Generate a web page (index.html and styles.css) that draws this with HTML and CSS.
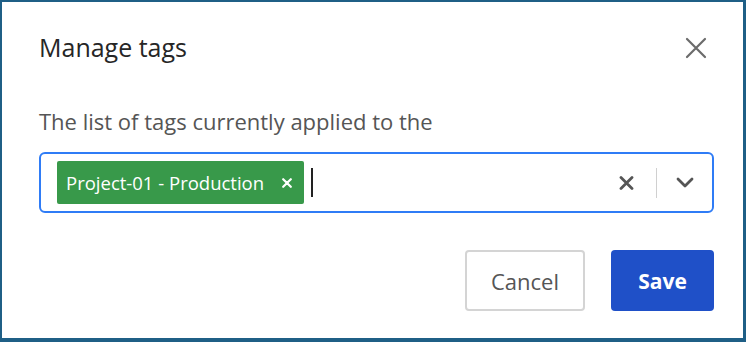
FILE: index.html
```html
<!DOCTYPE html>
<html>
<head>
<meta charset="utf-8">
<link rel="stylesheet" href="styles.css">
</head>
<body>
<div class="dialog">
  <div class="header">
    <h1 class="title">Manage tags</h1>
    <button class="close" aria-label="Close">
      <svg width="22" height="22" viewBox="0 0 22 22"><path d="M2 2 L20 20 M20 2 L2 20" stroke="#6b6b6b" stroke-width="2.2" stroke-linecap="round"/></svg>
    </button>
  </div>
  <p class="desc">The list of tags currently applied to the</p>
  <div class="select">
    <div class="values">
      <span class="tag">Project-01 - Production
        <svg class="tag-x" width="10" height="10" viewBox="0 0 10 10"><path d="M1.2 1.2 L8.8 8.8 M8.8 1.2 L1.2 8.8" stroke="#fff" stroke-width="2.2" stroke-linecap="round"/></svg>
      </span>
      <span class="caret"></span>
    </div>
    <div class="indicators">
      <svg class="clear" width="15" height="14" viewBox="0 0 15 14"><path d="M2 1.5 L13 12.5 M13 1.5 L2 12.5" stroke="#555" stroke-width="2.8" stroke-linecap="round"/></svg>
      <span class="sep"></span>
      <svg class="chev" width="18" height="11" viewBox="0 0 18 11"><path d="M2 2 L9 9 L16 2" fill="none" stroke="#555" stroke-width="2.8" stroke-linecap="round" stroke-linejoin="round"/></svg>
    </div>
  </div>
  <div class="footer">
    <button class="btn cancel">Cancel</button>
    <button class="btn save">Save</button>
  </div>
</div>
</body>
</html>
```
FILE: styles.css
```css
html, body {
  margin: 0;
  padding: 0;
  background: #fff;
}
body {
  width: 746px;
  height: 342px;
  font-family: "Open Sans", "Noto Sans", sans-serif;
  overflow: hidden;
}
.dialog {
  box-sizing: border-box;
  width: 746px;
  height: 342px;
  border-style: solid;
  border-color: #1f5f86;
  border-width: 2px 3px 4px 2px;
  padding: 28px 29px 0 37px;
  display: flex;
  flex-direction: column;
}
.header {
  display: flex;
  align-items: center;
  justify-content: space-between;
}
.title {
  margin: 0;
  font-size: 25px;
  font-weight: 400;
  color: #262626;
  line-height: 34px;
}
.close {
  background: none;
  border: 0;
  padding: 0;
  margin-right: 7px;
  width: 22px;
  height: 22px;
  display: flex;
  position: relative;
  top: 1px;
}
.desc {
  margin: 42px 0 0 0;
  font-size: 22px;
  line-height: 30px;
  color: #555;
}
.select {
  margin-top: 16px;
  box-sizing: border-box;
  height: 61px;
  border: 2px solid #2f7cf6;
  border-radius: 6px;
  display: flex;
  align-items: center;
  justify-content: space-between;
  padding: 0 18px 0 16px;
}
.values {
  display: flex;
  align-items: center;
}
.tag {
  display: flex;
  align-items: center;
  background: #38994a;
  color: #fff;
  font-size: 18.5px;
  font-weight: 500;
  height: 43px;
  padding: 0 12px 0 9px;
  border-radius: 2px;
}
.tag-x {
  margin-left: 18px;
}
.caret {
  display: inline-block;
  width: 2px;
  height: 29px;
  background: #222;
  margin-left: 7px;
}
.indicators {
  display: flex;
  align-items: center;
}
.sep {
  width: 1px;
  height: 30px;
  background: #d0d0d0;
  margin: 0 19px 0 22px;
}
.footer {
  display: flex;
  justify-content: flex-end;
  gap: 26px;
  margin-top: 37px;
}
.btn {
  height: 61px;
  font-family: "Open Sans", "Noto Sans", sans-serif;
  font-size: 22px;
  border-radius: 4px;
  cursor: pointer;
}
.cancel {
  width: 120px;
  background: #fff;
  border: 2px solid #d4d4d4;
  color: #555;
}
.save {
  width: 103px;
  background: #1f50c8;
  border: 0;
  color: #fff;
  font-weight: 700;
  font-size: 21px;
}
```
